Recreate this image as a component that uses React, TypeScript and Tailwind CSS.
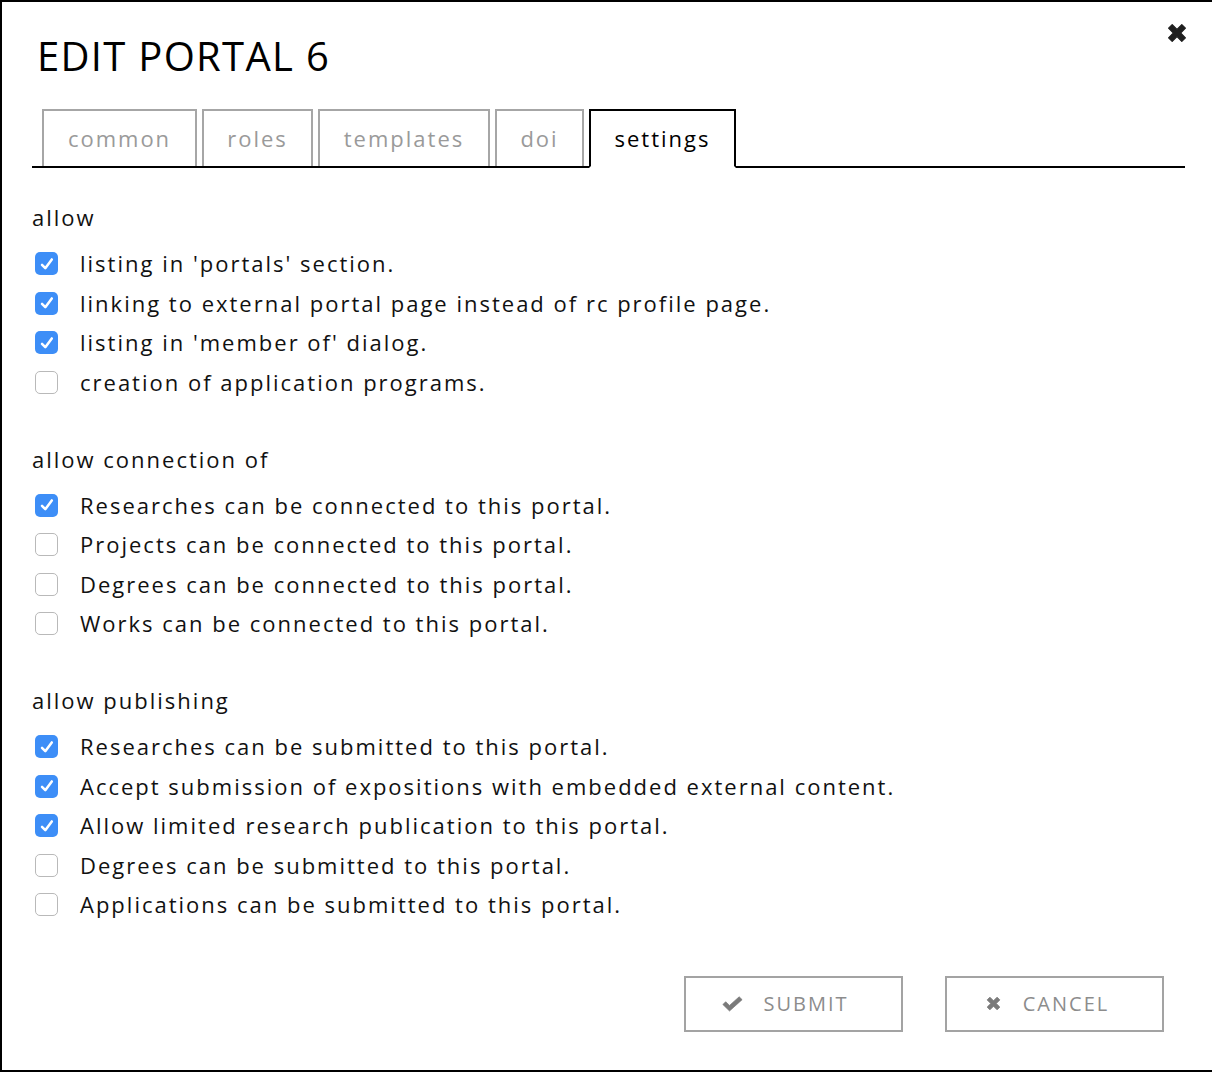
import { useState } from 'react';

interface Option {
  label: string;
  checked: boolean;
}

const allowOptions: Option[] = [
  { label: "listing in 'portals' section.", checked: true },
  { label: 'linking to external portal page instead of rc profile page.', checked: true },
  { label: "listing in 'member of' dialog.", checked: true },
  { label: 'creation of application programs.', checked: false },
];

const connectionOptions: Option[] = [
  { label: 'Researches can be connected to this portal.', checked: true },
  { label: 'Projects can be connected to this portal.', checked: false },
  { label: 'Degrees can be connected to this portal.', checked: false },
  { label: 'Works can be connected to this portal.', checked: false },
];

const publishingOptions: Option[] = [
  { label: 'Researches can be submitted to this portal.', checked: true },
  { label: 'Accept submission of expositions with embedded external content.', checked: true },
  { label: 'Allow limited research publication to this portal.', checked: true },
  { label: 'Degrees can be submitted to this portal.', checked: false },
  { label: 'Applications can be submitted to this portal.', checked: false },
];

const tabs = [
  { name: 'common', width: 'w-[155px]' },
  { name: 'roles', width: 'w-[111px]' },
  { name: 'templates', width: 'w-[172px]' },
  { name: 'doi', width: 'w-[89px]' },
  { name: 'settings', width: 'w-[147px]' },
];

// heavy "times" glyph, like the font-awesome one
function TimesIcon({ className }: { className?: string }) {
  return (
    <svg viewBox="0 0 20 20" className={className} fill="currentColor">
      <path d="M1.6 5.2 5.2 1.6 10 6.4 14.8 1.6 18.4 5.2 13.6 10 18.4 14.8 14.8 18.4 10 13.6 5.2 18.4 1.6 14.8 6.4 10Z" strokeLinejoin="round" stroke="currentColor" strokeWidth="1.2" />
    </svg>
  );
}

function CheckIcon({ className }: { className?: string }) {
  return (
    <svg viewBox="0 0 24 18" className={className} fill="currentColor">
      <path d="M1 9.6 4.2 6.4 8.6 10.6 19.6 0.8 23 4 8.6 17Z" stroke="currentColor" strokeWidth="0.8" strokeLinejoin="round" />
    </svg>
  );
}

function Checkbox({ checked, onChange }: { checked: boolean; onChange: () => void }) {
  return (
    <button
      type="button"
      onClick={onChange}
      className={
        checked
          ? 'flex items-center justify-center w-[23px] h-[23px] rounded-[5px] bg-[#3d8ef7]'
          : 'flex items-center justify-center w-[23px] h-[23px] rounded-[5px] bg-white border border-[#b9b9b9]'
      }
    >
      {checked && (
        <svg viewBox="0 0 16 16" className="w-[16px] h-[16px]" fill="none" stroke="white" strokeWidth="2.5" strokeLinecap="round" strokeLinejoin="round">
          <path d="M3 8.8 6.3 12.2 12.8 3.4" />
        </svg>
      )}
    </button>
  );
}

function Section({ title, options, first }: { title: string; options: Option[]; first?: boolean }) {
  const [values, setValues] = useState(options.map((o) => o.checked));

  return (
    <div className={first ? 'mt-[29px]' : 'mt-[37px]'}>
      <div className="h-10 flex items-center">{title}</div>
      <div className={first ? 'mt-[7px]' : 'mt-[6px]'}>
        {options.map((opt, i) => (
          <label key={opt.label} className="h-[39.6px] flex items-center cursor-pointer">
            <span className="w-[48px] pl-[3px]">
              <Checkbox
                checked={values[i]}
                onChange={() => setValues(values.map((v, j) => (j === i ? !v : v)))}
              />
            </span>
            <span>{opt.label}</span>
          </label>
        ))}
      </div>
    </div>
  );
}

export default function App() {
  const [activeTab, setActiveTab] = useState('settings');

  return (
    <div
      className="relative w-[1212px] h-[1072px] bg-white border-l-2 border-t-2 border-b-2 border-black text-[#111] text-[22px] tracking-[2px]"
      style={{ fontFamily: '"Open Sans", "Liberation Sans", sans-serif' }}
    >
      <div className="pl-[30px] pr-[27px]">
        <div className="flex items-start justify-between">
          <h1 className="mt-[30px] ml-[5px] text-[40px] leading-[48px] tracking-[1.3px] text-black">
            EDIT PORTAL 6
          </h1>
          <button type="button" className="mt-[21px] -mr-[2px] text-[#1f1f1f]">
            <TimesIcon className="w-[20px] h-[20px]" />
          </button>
        </div>

        <div className="mt-[29px] flex items-end gap-[5px] pl-[10px] border-b-2 border-black h-[59px]">
          {tabs.map((tab) =>
            tab.name === activeTab ? (
              <button
                key={tab.name}
                type="button"
                className={`${tab.width} h-[59px] -mb-[2px] border-2 border-black border-b-2 border-b-white bg-white text-black`}
              >
                {tab.name}
              </button>
            ) : (
              <button
                key={tab.name}
                type="button"
                onClick={() => setActiveTab(tab.name)}
                className={`${tab.width} h-[57px] border-2 border-b-0 border-[#a6a6a6] text-[#9a9a9a]`}
              >
                {tab.name}
              </button>
            )
          )}
        </div>

        <Section title="allow" options={allowOptions} first />
        <Section title="allow connection of" options={connectionOptions} />
        <Section title="allow publishing" options={publishingOptions} />

        <div className="mt-[51px] mr-[21px] flex justify-end gap-[42px] text-[20px] text-[#8c8c8c]">
          <button
            type="button"
            className="w-[219px] h-[56px] border-2 border-[#a3a3a3] flex items-center justify-center gap-[20px] pr-[16px] uppercase"
          >
            <CheckIcon className="w-[21px] h-[16px] text-[#7a7a7a]" />
            Submit
          </button>
          <button
            type="button"
            className="w-[219px] h-[56px] border-2 border-[#a3a3a3] flex items-center justify-center gap-[22px] pr-[14px] uppercase"
          >
            <TimesIcon className="w-[15px] h-[15px] text-[#7a7a7a]" />
            Cancel
          </button>
        </div>
      </div>
    </div>
  );
}
